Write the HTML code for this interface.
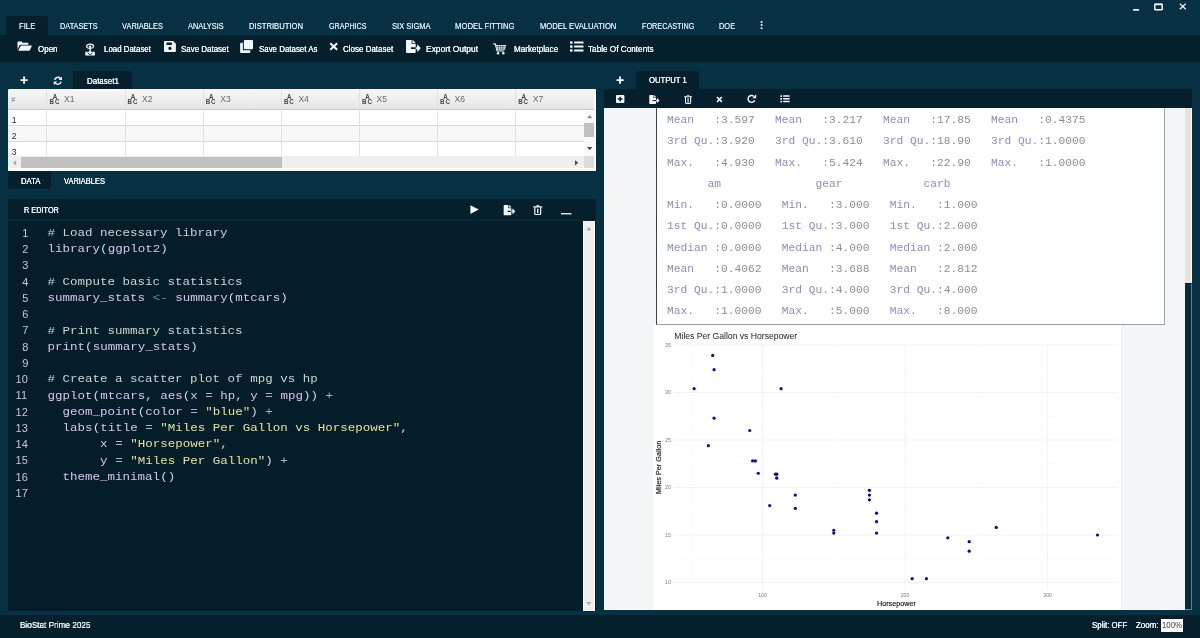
<!DOCTYPE html>
<html lang="en"><head><meta charset="utf-8"><title>BioStat Prime 2025</title>
<style>
*{margin:0;padding:0;box-sizing:border-box}
html,body{width:1200px;height:638px;overflow:hidden;background:#073042}
body{position:relative;font-family:"Liberation Sans", sans-serif}
#app{position:absolute;left:0;top:0;width:1200px;height:638px;will-change:transform}
.b{position:absolute}
.t{position:absolute;white-space:pre;transform-origin:0 50%;font-family:"Liberation Sans", sans-serif;text-shadow:0 0 .5px currentColor}
.ic{position:absolute;overflow:visible}
.ln{position:absolute;font:11px/14px "Liberation Sans", sans-serif;color:#c4cacd}
.cd{position:absolute;white-space:pre;font:12.5px/16.25px "Liberation Mono", monospace;color:#d6c6ef;transform-origin:0 11.45px;transform:scaleY(.87)}
.ot{position:absolute;white-space:pre;font:11.25px/14px "Liberation Mono", monospace;color:#8b8eba;transform-origin:0 10px;transform:scaleY(.91)}
.plot{position:absolute;font-family:"Liberation Sans", sans-serif}
#grid{position:absolute;left:8px;top:89px;width:588.2px;height:82px;background:#fff;border-radius:2px 2px 0 0;overflow:hidden}
#grid .hd{position:absolute;left:0;top:0;width:100%;height:21px;background:linear-gradient(#f7f7f7,#e6e6e6);border-bottom:1px solid #c9c9c9}
#grid .vl{position:absolute;top:0;width:1px;height:68px;background:#e2e2e2}
#grid .hx{position:absolute;top:6.2px;font:8.6px/9px "Liberation Sans", sans-serif;color:#6a6a6a}
#grid .hash{position:absolute;left:3.2px;top:6.5px;font:italic 7px/8px "Liberation Sans", sans-serif;color:#777}
#grid .abc{position:absolute;top:5.6px;width:10px;height:10px}
#grid .abc b{position:absolute;font:700 6.2px/6.2px "Liberation Sans", sans-serif;color:#444;transform:scaleY(1.15)}
#grid .rn{position:absolute;left:3.8px;font:8.6px/9px "Liberation Sans", sans-serif;color:#2a2a2a}
#grid .rl{position:absolute;left:0;width:576px;height:1px;background:#d9d9d9}
</style></head><body><div id="app">
<!-- menu / toolbar -->
<div class="b" style="left:6px;top:16px;width:41.5px;height:20px;background:#051f2c;border-radius:2.5px 2.5px 0 0"></div>
<div class="b" style="left:0;top:35.2px;width:1200px;height:27.2px;background:#051f2c"></div>
<!-- dataset tab + grid -->
<div class="b" style="left:73.4px;top:71.2px;width:58.4px;height:18px;background:#051f2c;border-radius:2.5px 2.5px 0 0"></div>
<div id="grid">
<div class="hd"></div>
<div class="b" style="left:0;top:36.0px;width:576px;height:15.6px;background:#f8f8f8"></div>
<i class="rl" style="top:36.0px"></i><i class="rl" style="top:51.6px"></i>
<span class="hash">#</span>
<i class="vl" style="left:38.4px"></i><span class="hx" style="left:56.0px">X1</span><span class="abc" style="left:41.8px"><b style="left:2.9px;top:-.3px">A</b><b style="left:-.3px;top:4.7px">B</b><b style="left:5.1px;top:4.7px">C</b></span><i class="vl" style="left:116.5px"></i><span class="hx" style="left:134.1px">X2</span><span class="abc" style="left:119.9px"><b style="left:2.9px;top:-.3px">A</b><b style="left:-.3px;top:4.7px">B</b><b style="left:5.1px;top:4.7px">C</b></span><i class="vl" style="left:194.6px"></i><span class="hx" style="left:212.2px">X3</span><span class="abc" style="left:198.0px"><b style="left:2.9px;top:-.3px">A</b><b style="left:-.3px;top:4.7px">B</b><b style="left:5.1px;top:4.7px">C</b></span><i class="vl" style="left:272.8px"></i><span class="hx" style="left:290.4px">X4</span><span class="abc" style="left:276.2px"><b style="left:2.9px;top:-.3px">A</b><b style="left:-.3px;top:4.7px">B</b><b style="left:5.1px;top:4.7px">C</b></span><i class="vl" style="left:350.9px"></i><span class="hx" style="left:368.5px">X5</span><span class="abc" style="left:354.3px"><b style="left:2.9px;top:-.3px">A</b><b style="left:-.3px;top:4.7px">B</b><b style="left:5.1px;top:4.7px">C</b></span><i class="vl" style="left:429.0px"></i><span class="hx" style="left:446.6px">X6</span><span class="abc" style="left:432.4px"><b style="left:2.9px;top:-.3px">A</b><b style="left:-.3px;top:4.7px">B</b><b style="left:5.1px;top:4.7px">C</b></span><i class="vl" style="left:507.1px"></i><span class="hx" style="left:524.7px">X7</span><span class="abc" style="left:510.5px"><b style="left:2.9px;top:-.3px">A</b><b style="left:-.3px;top:4.7px">B</b><b style="left:5.1px;top:4.7px">C</b></span><span class="rn" style="top:27.00px">1</span><span class="rn" style="top:42.75px">2</span><span class="rn" style="top:58.50px">3</span>
<!-- vertical scrollbar -->
<div class="b" style="left:575.6px;top:21.2px;width:12.6px;height:46.4px;background:#fafafa"></div>
<div class="b" style="left:576.2px;top:34.4px;width:10.9px;height:13.2px;background:#c1c1c1"></div>
<svg class="ic" style="left:578.6px;top:26.4px" width="5.4" height="3.2" viewBox="0 0 10 6"><path d="M0 6L5 0L10 6Z" fill="#8a8a8a"/></svg>
<svg class="ic" style="left:578.6px;top:58.2px" width="5.4" height="3.2" viewBox="0 0 10 6"><path d="M0 0L5 6L10 0Z" fill="#444"/></svg>
<!-- horizontal scrollbar -->
<div class="b" style="left:0;top:67.4px;width:576px;height:12px;background:#f0efee"></div>
<div class="b" style="left:575.6px;top:67.4px;width:12.6px;height:12px;background:#dcdcdc"></div>
<div class="b" style="left:13.4px;top:68.4px;width:260.6px;height:10.2px;background:#c1c1c1"></div>
<svg class="ic" style="left:5.2px;top:70.6px" width="3.2" height="5.6" viewBox="0 0 6 10"><path d="M6 0L0 5L6 10Z" fill="#a5a5a5"/></svg>
<svg class="ic" style="left:566.6px;top:70.6px" width="3.2" height="5.6" viewBox="0 0 6 10"><path d="M0 0L6 5L0 10Z" fill="#444"/></svg>
<div class="b" style="left:0;top:79.6px;width:588.2px;height:2.4px;background:#fbfbfb"></div>
<div class="b" style="left:586.4px;top:0;width:1.8px;height:82px;background:#fbfbfb"></div>
</div>
<!-- DATA / VARIABLES tabs -->
<div class="b" style="left:8px;top:171px;width:43.4px;height:17.9px;background:#051f2c;border-radius:0 0 2.5px 2.5px"></div>
<!-- R editor -->
<div class="b" style="left:8px;top:198.8px;width:588.2px;height:22px;background:#051f2c"></div>
<div class="b" style="left:8px;top:220.8px;width:588.2px;height:390.2px;background:#051d29"></div>
<div class="b" style="left:8px;top:219.9px;width:588.2px;height:1px;background:#0a2a38"></div>
<div class="b" style="left:582.6px;top:221.2px;width:12.9px;height:389.9px;background:#f0eeed;border-left:1px solid #fbfbfb;border-right:1px solid #fbfbfb"></div>
<svg class="ic" style="left:586.4px;top:227.4px" width="5.6" height="3.2" viewBox="0 0 10 6"><path d="M0 6L5 0L10 6Z" fill="#a9a9a9"/></svg>
<svg class="ic" style="left:586.4px;top:601.6px" width="5.6" height="3.2" viewBox="0 0 10 6"><path d="M0 0L5 6L10 0Z" fill="#a9a9a9"/></svg>
<span class="ln" style="left:22.2px;top:225.75px">1</span><span class="cd" style="left:47.6px;top:225.20px"><span style="color:#c6d6d3"># Load necessary library</span></span><span class="ln" style="left:22.2px;top:242.00px">2</span><span class="cd" style="left:47.6px;top:241.45px"><span style="color:#d6c6ef">library</span><span style="color:#c9dfe1">(</span><span style="color:#d6c6ef">ggplot2</span><span style="color:#c9dfe1">)</span></span><span class="ln" style="left:22.2px;top:258.25px">3</span><span class="ln" style="left:22.2px;top:274.50px">4</span><span class="cd" style="left:47.6px;top:273.95px"><span style="color:#c6d6d3"># Compute basic statistics</span></span><span class="ln" style="left:22.2px;top:290.75px">5</span><span class="cd" style="left:47.6px;top:290.20px"><span style="color:#d6c6ef">summary_stats</span> <span style="color:#3a9ea8">&lt;-</span> <span style="color:#d6c6ef">summary</span><span style="color:#c9dfe1">(</span><span style="color:#d6c6ef">mtcars</span><span style="color:#c9dfe1">)</span></span><span class="ln" style="left:22.2px;top:307.00px">6</span><span class="ln" style="left:22.2px;top:323.25px">7</span><span class="cd" style="left:47.6px;top:322.70px"><span style="color:#c6d6d3"># Print summary statistics</span></span><span class="ln" style="left:22.2px;top:339.50px">8</span><span class="cd" style="left:47.6px;top:338.95px"><span style="color:#d6c6ef">print</span><span style="color:#c9dfe1">(</span><span style="color:#d6c6ef">summary_stats</span><span style="color:#c9dfe1">)</span></span><span class="ln" style="left:22.2px;top:355.75px">9</span><span class="ln" style="left:15.6px;top:372.00px">10</span><span class="cd" style="left:47.6px;top:371.45px"><span style="color:#c6d6d3"># Create a scatter plot of mpg vs hp</span></span><span class="ln" style="left:15.6px;top:388.25px">11</span><span class="cd" style="left:47.6px;top:387.70px"><span style="color:#d6c6ef">ggplot</span><span style="color:#c9dfe1">(</span><span style="color:#d6c6ef">mtcars</span><span style="color:#c9dfe1">,</span> <span style="color:#d6c6ef">aes</span><span style="color:#c9dfe1">(</span><span style="color:#d6c6ef">x</span> <span style="color:#b3abd9">=</span> <span style="color:#d6c6ef">hp</span><span style="color:#c9dfe1">,</span> <span style="color:#d6c6ef">y</span> <span style="color:#b3abd9">=</span> <span style="color:#d6c6ef">mpg</span><span style="color:#c9dfe1">))</span> <span style="color:#b3abd9">+</span></span><span class="ln" style="left:15.6px;top:404.50px">12</span><span class="cd" style="left:47.6px;top:403.95px">  <span style="color:#d6c6ef">geom_point</span><span style="color:#c9dfe1">(</span><span style="color:#d6c6ef">color</span> <span style="color:#b3abd9">=</span> <span style="color:#e2e0a2">"blue"</span><span style="color:#c9dfe1">)</span> <span style="color:#b3abd9">+</span></span><span class="ln" style="left:15.6px;top:420.75px">13</span><span class="cd" style="left:47.6px;top:420.20px">  <span style="color:#d6c6ef">labs</span><span style="color:#c9dfe1">(</span><span style="color:#d6c6ef">title</span> <span style="color:#b3abd9">=</span> <span style="color:#e2e0a2">"Miles Per Gallon vs Horsepower"</span><span style="color:#c9dfe1">,</span></span><span class="ln" style="left:15.6px;top:437.00px">14</span><span class="cd" style="left:47.6px;top:436.45px">       <span style="color:#d6c6ef">x</span> <span style="color:#b3abd9">=</span> <span style="color:#e2e0a2">"Horsepower"</span><span style="color:#c9dfe1">,</span></span><span class="ln" style="left:15.6px;top:453.25px">15</span><span class="cd" style="left:47.6px;top:452.70px">       <span style="color:#d6c6ef">y</span> <span style="color:#b3abd9">=</span> <span style="color:#e2e0a2">"Miles Per Gallon"</span><span style="color:#c9dfe1">)</span> <span style="color:#b3abd9">+</span></span><span class="ln" style="left:15.6px;top:469.50px">16</span><span class="cd" style="left:47.6px;top:468.95px">  <span style="color:#d6c6ef">theme_minimal</span><span style="color:#c9dfe1">()</span></span><span class="ln" style="left:15.6px;top:485.75px">17</span>
<!-- output panel -->
<div class="b" style="left:636px;top:70.8px;width:62.5px;height:19px;background:#051f2c;border-radius:2.5px 2.5px 0 0"></div>
<div class="b" style="left:604px;top:89.4px;width:588px;height:18.6px;background:#051f2c"></div>
<div class="b" style="left:604px;top:107.6px;width:588px;height:502.4px;background:#f4f5f7"></div>
<div class="b" style="left:656px;top:100px;width:509.2px;height:224.8px;background:#fff;border:1px solid #9aa0a3;border-left-color:#3c4246"></div>
<div class="b" style="left:604px;top:89.4px;width:588px;height:18.2px;background:#051f2c"></div>
<span class="ot" style="left:666.9px;top:113.06px">Mean   <span style="color:#8e8e8e">:3.597</span>   Mean   <span style="color:#8e8e8e">:3.217</span>   Mean   <span style="color:#8e8e8e">:17.85</span>   Mean   <span style="color:#8e8e8e">:0.4375</span></span><span class="ot" style="left:666.9px;top:134.31px">3rd Qu.<span style="color:#8e8e8e">:3.920</span>   3rd Qu.<span style="color:#8e8e8e">:3.610</span>   3rd Qu.<span style="color:#8e8e8e">:18.90</span>   3rd Qu.<span style="color:#8e8e8e">:1.0000</span></span><span class="ot" style="left:666.9px;top:155.56px">Max.   <span style="color:#8e8e8e">:4.930</span>   Max.   <span style="color:#8e8e8e">:5.424</span>   Max.   <span style="color:#8e8e8e">:22.90</span>   Max.   <span style="color:#8e8e8e">:1.0000</span></span><span class="ot" style="left:666.9px;top:176.81px">      am              gear            carb</span><span class="ot" style="left:666.9px;top:198.06px">Min.   <span style="color:#8e8e8e">:0.0000</span>   Min.   <span style="color:#8e8e8e">:3.000</span>   Min.   <span style="color:#8e8e8e">:1.000</span></span><span class="ot" style="left:666.9px;top:219.31px">1st Qu.<span style="color:#8e8e8e">:0.0000</span>   1st Qu.<span style="color:#8e8e8e">:3.000</span>   1st Qu.<span style="color:#8e8e8e">:2.000</span></span><span class="ot" style="left:666.9px;top:240.56px">Median <span style="color:#8e8e8e">:0.0000</span>   Median <span style="color:#8e8e8e">:4.000</span>   Median <span style="color:#8e8e8e">:2.000</span></span><span class="ot" style="left:666.9px;top:261.81px">Mean   <span style="color:#8e8e8e">:0.4062</span>   Mean   <span style="color:#8e8e8e">:3.688</span>   Mean   <span style="color:#8e8e8e">:2.812</span></span><span class="ot" style="left:666.9px;top:283.06px">3rd Qu.<span style="color:#8e8e8e">:1.0000</span>   3rd Qu.<span style="color:#8e8e8e">:4.000</span>   3rd Qu.<span style="color:#8e8e8e">:4.000</span></span><span class="ot" style="left:666.9px;top:304.31px">Max.   <span style="color:#8e8e8e">:1.0000</span>   Max.   <span style="color:#8e8e8e">:5.000</span>   Max.   <span style="color:#8e8e8e">:8.000</span></span>
<svg class="plot" style="left:652.6px;top:324.6px" width="468.6" height="285.4" viewBox="0 0 468.6 285.4"><rect width="468.6" height="285.4" fill="#fff"/><line x1="20.9" x2="464.7" y1="233.75" y2="233.75" stroke="#f6f6f6" stroke-width="0.4"/><line x1="20.9" x2="464.7" y1="186.25" y2="186.25" stroke="#f6f6f6" stroke-width="0.4"/><line x1="20.9" x2="464.7" y1="138.75" y2="138.75" stroke="#f6f6f6" stroke-width="0.4"/><line x1="20.9" x2="464.7" y1="91.25" y2="91.25" stroke="#f6f6f6" stroke-width="0.4"/><line x1="20.9" x2="464.7" y1="43.75" y2="43.75" stroke="#f6f6f6" stroke-width="0.4"/><line y1="19.3" y2="264.9" x1="38.23" x2="38.23" stroke="#f6f6f6" stroke-width="0.4"/><line y1="19.3" y2="264.9" x1="180.77" x2="180.77" stroke="#f6f6f6" stroke-width="0.4"/><line y1="19.3" y2="264.9" x1="323.32" x2="323.32" stroke="#f6f6f6" stroke-width="0.4"/><line x1="20.9" x2="464.7" y1="257.50" y2="257.50" stroke="#eeeeee" stroke-width="0.7"/><text x="17.9" y="259.40" text-anchor="end" font-size="5.2" fill="#7d7d7d">10</text><line x1="20.9" x2="464.7" y1="210.00" y2="210.00" stroke="#eeeeee" stroke-width="0.7"/><text x="17.9" y="211.90" text-anchor="end" font-size="5.2" fill="#7d7d7d">15</text><line x1="20.9" x2="464.7" y1="162.50" y2="162.50" stroke="#eeeeee" stroke-width="0.7"/><text x="17.9" y="164.40" text-anchor="end" font-size="5.2" fill="#7d7d7d">20</text><line x1="20.9" x2="464.7" y1="115.00" y2="115.00" stroke="#eeeeee" stroke-width="0.7"/><text x="17.9" y="116.90" text-anchor="end" font-size="5.2" fill="#7d7d7d">25</text><line x1="20.9" x2="464.7" y1="67.50" y2="67.50" stroke="#eeeeee" stroke-width="0.7"/><text x="17.9" y="69.40" text-anchor="end" font-size="5.2" fill="#7d7d7d">30</text><line x1="20.9" x2="464.7" y1="20.00" y2="20.00" stroke="#eeeeee" stroke-width="0.7"/><text x="17.9" y="21.90" text-anchor="end" font-size="5.2" fill="#7d7d7d">35</text><line y1="19.3" y2="264.9" x1="109.50" x2="109.50" stroke="#eeeeee" stroke-width="0.7"/><text x="109.50" y="272.00" text-anchor="middle" font-size="5.2" fill="#7d7d7d">100</text><line y1="19.3" y2="264.9" x1="252.05" x2="252.05" stroke="#eeeeee" stroke-width="0.7"/><text x="252.05" y="272.00" text-anchor="middle" font-size="5.2" fill="#7d7d7d">200</text><line y1="19.3" y2="264.9" x1="394.60" x2="394.60" stroke="#eeeeee" stroke-width="0.7"/><text x="394.60" y="272.00" text-anchor="middle" font-size="5.2" fill="#7d7d7d">300</text><circle cx="123.75" cy="153.00" r="1.6" fill="#0b0b8e"/><circle cx="123.75" cy="153.00" r="1.6" fill="#0b0b8e"/><circle cx="99.52" cy="135.90" r="1.6" fill="#0b0b8e"/><circle cx="123.75" cy="149.20" r="1.6" fill="#0b0b8e"/><circle cx="216.41" cy="174.85" r="1.6" fill="#0b0b8e"/><circle cx="116.63" cy="180.55" r="1.6" fill="#0b0b8e"/><circle cx="316.20" cy="216.65" r="1.6" fill="#0b0b8e"/><circle cx="55.33" cy="120.70" r="1.6" fill="#0b0b8e"/><circle cx="102.37" cy="135.90" r="1.6" fill="#0b0b8e"/><circle cx="142.29" cy="170.10" r="1.6" fill="#0b0b8e"/><circle cx="142.29" cy="183.40" r="1.6" fill="#0b0b8e"/><circle cx="223.54" cy="196.70" r="1.6" fill="#0b0b8e"/><circle cx="223.54" cy="188.15" r="1.6" fill="#0b0b8e"/><circle cx="223.54" cy="208.10" r="1.6" fill="#0b0b8e"/><circle cx="259.18" cy="253.70" r="1.6" fill="#0b0b8e"/><circle cx="273.43" cy="253.70" r="1.6" fill="#0b0b8e"/><circle cx="294.81" cy="212.85" r="1.6" fill="#0b0b8e"/><circle cx="61.03" cy="44.70" r="1.6" fill="#0b0b8e"/><circle cx="41.08" cy="63.70" r="1.6" fill="#0b0b8e"/><circle cx="59.61" cy="30.45" r="1.6" fill="#0b0b8e"/><circle cx="105.22" cy="148.25" r="1.6" fill="#0b0b8e"/><circle cx="180.77" cy="205.25" r="1.6" fill="#0b0b8e"/><circle cx="180.77" cy="208.10" r="1.6" fill="#0b0b8e"/><circle cx="316.20" cy="226.15" r="1.6" fill="#0b0b8e"/><circle cx="216.41" cy="170.10" r="1.6" fill="#0b0b8e"/><circle cx="61.03" cy="93.15" r="1.6" fill="#0b0b8e"/><circle cx="96.67" cy="105.50" r="1.6" fill="#0b0b8e"/><circle cx="128.03" cy="63.70" r="1.6" fill="#0b0b8e"/><circle cx="343.28" cy="202.40" r="1.6" fill="#0b0b8e"/><circle cx="216.41" cy="165.35" r="1.6" fill="#0b0b8e"/><circle cx="444.49" cy="210.00" r="1.6" fill="#0b0b8e"/><circle cx="122.33" cy="149.20" r="1.6" fill="#0b0b8e"/><text x="21.3" y="14.3" font-size="8.6" fill="#1a1a1a" textLength="122.9" lengthAdjust="spacingAndGlyphs">Miles Per Gallon vs Horsepower</text><text x="243.4" y="281.0" font-size="7.2" fill="#111" stroke="#111" stroke-width=".15" text-anchor="middle">Horsepower</text><text transform="translate(8.3,142.4) rotate(-90)" font-size="7.3" fill="#111" stroke="#111" stroke-width=".15" text-anchor="middle">Miles Per Gallon</text></svg>
<!-- output scrollbar -->
<div class="b" style="left:1185.4px;top:107.6px;width:5.4px;height:175.6px;background:#e6e2e0"></div>
<div class="b" style="left:1190.8px;top:107.6px;width:1.2px;height:175.6px;background:#fbfbfb"></div>
<div class="b" style="left:1185.4px;top:283.2px;width:6.6px;height:326.8px;background:#072a3b;border-right:1.2px solid #5e7f95;border-bottom:1.2px solid #5e7f95;border-top:1.4px solid #051a25"></div>
<!-- status bar -->
<div class="b" style="left:0;top:615.2px;width:1200px;height:22.8px;background:#051f2c"></div>
<div class="b" style="left:1160.6px;top:619px;width:22.6px;height:13.4px;background:#fff"></div>
<span class="t" style="left:18.8px;top:22.18px;font-size:9.0px;line-height:9.0px;color:#d4e9f2;font-weight:400;transform:scaleX(0.8572)">FILE</span><span class="t" style="left:60.0px;top:22.18px;font-size:9.0px;line-height:9.0px;color:#d4e9f2;font-weight:400;transform:scaleX(0.8141)">DATASETS</span><span class="t" style="left:122.3px;top:22.18px;font-size:9.0px;line-height:9.0px;color:#d4e9f2;font-weight:400;transform:scaleX(0.8286)">VARIABLES</span><span class="t" style="left:188.3px;top:22.18px;font-size:9.0px;line-height:9.0px;color:#d4e9f2;font-weight:400;transform:scaleX(0.8234)">ANALYSIS</span><span class="t" style="left:249.1px;top:22.18px;font-size:9.0px;line-height:9.0px;color:#d4e9f2;font-weight:400;transform:scaleX(0.8502)">DISTRIBUTION</span><span class="t" style="left:328.9px;top:22.18px;font-size:9.0px;line-height:9.0px;color:#d4e9f2;font-weight:400;transform:scaleX(0.7997)">GRAPHICS</span><span class="t" style="left:391.6px;top:22.18px;font-size:9.0px;line-height:9.0px;color:#d4e9f2;font-weight:400;transform:scaleX(0.8388)">SIX SIGMA</span><span class="t" style="left:455.0px;top:22.18px;font-size:9.0px;line-height:9.0px;color:#d4e9f2;font-weight:400;transform:scaleX(0.8616)">MODEL FITTING</span><span class="t" style="left:539.7px;top:22.18px;font-size:9.0px;line-height:9.0px;color:#d4e9f2;font-weight:400;transform:scaleX(0.8502)">MODEL EVALUATION</span><span class="t" style="left:641.7px;top:22.18px;font-size:9.0px;line-height:9.0px;color:#d4e9f2;font-weight:400;transform:scaleX(0.8060)">FORECASTING</span><span class="t" style="left:718.8px;top:22.18px;font-size:9.0px;line-height:9.0px;color:#d4e9f2;font-weight:400;transform:scaleX(0.8250)">DOE</span><span class="t" style="left:37.6px;top:44.78px;font-size:9.0px;line-height:9.0px;color:#e4eef3;font-weight:400;transform:scaleX(0.8851);text-shadow:0 0 .5px currentColor,0 0 .4px currentColor">Open</span><span class="t" style="left:104.4px;top:44.78px;font-size:9.0px;line-height:9.0px;color:#e4eef3;font-weight:400;transform:scaleX(0.8759);text-shadow:0 0 .5px currentColor,0 0 .4px currentColor">Load Dataset</span><span class="t" style="left:180.7px;top:44.78px;font-size:9.0px;line-height:9.0px;color:#e4eef3;font-weight:400;transform:scaleX(0.8828);text-shadow:0 0 .5px currentColor,0 0 .4px currentColor">Save Dataset</span><span class="t" style="left:258.5px;top:44.78px;font-size:9.0px;line-height:9.0px;color:#e4eef3;font-weight:400;transform:scaleX(0.8776);text-shadow:0 0 .5px currentColor,0 0 .4px currentColor">Save Dataset As</span><span class="t" style="left:343.3px;top:44.78px;font-size:9.0px;line-height:9.0px;color:#e4eef3;font-weight:400;transform:scaleX(0.8880);text-shadow:0 0 .5px currentColor,0 0 .4px currentColor">Close Dataset</span><span class="t" style="left:425.8px;top:44.78px;font-size:9.0px;line-height:9.0px;color:#e4eef3;font-weight:400;transform:scaleX(0.9382);text-shadow:0 0 .5px currentColor,0 0 .4px currentColor">Export Output</span><span class="t" style="left:514.0px;top:44.78px;font-size:9.0px;line-height:9.0px;color:#e4eef3;font-weight:400;transform:scaleX(0.9015);text-shadow:0 0 .5px currentColor,0 0 .4px currentColor">Marketplace</span><span class="t" style="left:588.4px;top:44.78px;font-size:9.0px;line-height:9.0px;color:#e4eef3;font-weight:400;transform:scaleX(0.9105);text-shadow:0 0 .5px currentColor,0 0 .4px currentColor">Table Of Contents</span><span class="t" style="left:86.8px;top:76.68px;font-size:9.0px;line-height:9.0px;color:#e4eef3;font-weight:400;transform:scaleX(0.8826);text-shadow:0 0 .5px currentColor,0 0 .4px currentColor">Dataset1</span><span class="t" style="left:20.5px;top:176.58px;font-size:9.0px;line-height:9.0px;color:#e4eef3;font-weight:400;transform:scaleX(0.8557);text-shadow:0 0 .5px currentColor,0 0 .4px currentColor">DATA</span><span class="t" style="left:64.2px;top:176.58px;font-size:9.0px;line-height:9.0px;color:#e4eef3;font-weight:400;transform:scaleX(0.8286);text-shadow:0 0 .5px currentColor,0 0 .4px currentColor">VARIABLES</span><span class="t" style="left:23.8px;top:205.78px;font-size:9.0px;line-height:9.0px;color:#e4eef3;font-weight:400;transform:scaleX(0.8146);text-shadow:0 0 .5px currentColor,0 0 .4px currentColor">R EDITOR</span><span class="t" style="left:649.0px;top:76.38px;font-size:9.0px;line-height:9.0px;color:#e4eef3;font-weight:400;transform:scaleX(0.8524);text-shadow:0 0 .5px currentColor,0 0 .4px currentColor">OUTPUT 1</span><span class="t" style="left:19.5px;top:621.08px;font-size:9.0px;line-height:9.0px;color:#e4eef3;font-weight:400;transform:scaleX(0.9091);text-shadow:0 0 .5px currentColor,0 0 .4px currentColor">BioStat Prime 2025</span><span class="t" style="left:1092.3px;top:621.48px;font-size:9.0px;line-height:9.0px;color:#e4eef3;font-weight:400;transform:scaleX(0.8688);text-shadow:0 0 .5px currentColor,0 0 .4px currentColor">Split: OFF</span><span class="t" style="left:1136.3px;top:621.48px;font-size:9.0px;line-height:9.0px;color:#e4eef3;font-weight:400;transform:scaleX(0.8818);text-shadow:0 0 .5px currentColor,0 0 .4px currentColor">Zoom:</span><span class="t" style="left:1162.0px;top:621.48px;font-size:9.0px;line-height:9.0px;color:#777;font-weight:400;transform:scaleX(0.8684)">100%</span>
<svg class="ic" style="left:17.3px;top:41.2px" width="15.2" height="10.3" viewBox="0 0 30 20" ><path fill="#f2f7fa" d="M1 2.5Q1 1 2.5 1H9l2.5 2.5H21q1.5 0 1.5 1.5v2H7.5Q5.5 7 4.7 8.8L1 16.5Z"/><path fill="#f2f7fa" d="M7.8 8.6H28.6q1.2 0 .7 1.1L25.6 17.8Q25 19 23.8 19H2.2Z"/></svg><svg class="ic" style="left:85.0px;top:42.6px" width="10.2" height="13.0" viewBox="0 0 20 26" ><ellipse cx="10" cy="6.3" rx="7" ry="4.2" fill="none" stroke="#eef4f7" stroke-width="2.4"/><ellipse cx="10" cy="6.8" rx="2.6" ry="1.7" fill="#f2f7fa"/><rect x="8.6" y="8" width="2.8" height="11" fill="#f2f7fa"/><rect x="0.4" y="17.4" width="19.2" height="7.8" rx=".8" fill="#f2f7fa"/><path d="M5 19.6L10 23.4L15 19.6" fill="none" stroke="#051f2c" stroke-width="1.9"/><rect x="8.8" y="16" width="2.4" height="5.4" fill="#f2f7fa"/></svg><svg class="ic" style="left:163.8px;top:40.8px" width="11.9" height="11.0" viewBox="0 0 24 22" ><path fill="#f2f7fa" fill-rule="evenodd" d="M2 0H18.5L24 5.5V20q0 2-2 2H2q-2 0-2-2V2Q0 0 2 0ZM5 2.8V8H16V2.8ZM12 11.5a3.3 3.3 0 1 0 .01 0Z"/></svg><svg class="ic" style="left:240.3px;top:39.9px" width="13.2" height="12.9" viewBox="0 0 26 26" ><rect x="7.5" y="0" width="18.5" height="18.5" rx="2" fill="#f2f7fa"/><path fill="#f2f7fa" d="M2 5.5H5.5V20.5H20.5V24q0 2-2 2H2q-2 0-2-2V7.5Q0 5.5 2 5.5Z"/></svg><svg class="ic" style="left:328.9px;top:42.0px" width="9.4" height="8.9" viewBox="0 0 19 18" ><path d="M2.6 2.4L16.4 15.6M16.4 2.4L2.6 15.6" stroke="#f2f7fa" stroke-width="4.2" stroke-linecap="butt"/></svg><svg class="ic" style="left:406.0px;top:39.9px" width="14.5" height="13.0" viewBox="0 0 576 512" ><path fill="#f2f7fa" d="M24 0H224V136q0 24 24 24H384V288H208q-16 0-16 16v32q0 16 16 16H384V488q0 24-24 24H24q-24 0-24-24V24Q0 0 24 0Z"/><path fill="#f2f7fa" d="M256 0h6q10 0 17 7l98 98q7 7 7 17v6H256Z"/><path fill="#f2f7fa" d="M384 282h56v-82c0-14 17-21 27-11l108 119q10 12 0 24l-108 119c-10 10-27 3-27-11V358h-56Z"/></svg><svg class="ic" style="left:493.3px;top:43.0px" width="13.4" height="12.2" viewBox="0 0 27 24" ><path d="M0.5 1.5H4.5L8.2 15.8H22.5" fill="none" stroke="#f2f7fa" stroke-width="2.2"/><path fill="#f2f7fa" d="M5.6 3.8H26.6L24 13.4H8.1Z"/><path d="M6 6.8H26M7 10H25M11 4V13M15.5 4V13M20 4V13" stroke="#051f2c" stroke-width="0.9"/><circle cx="10.2" cy="20.6" r="2.5" fill="#f2f7fa"/><circle cx="20.8" cy="20.6" r="2.5" fill="#f2f7fa"/></svg><svg class="ic" style="left:570.0px;top:40.8px" width="13.6" height="11.0" viewBox="0 0 27 22" ><rect x="0" y="0.5" width="5" height="5" rx="1" fill="#f2f7fa"/><rect x="0" y="8.5" width="5" height="5" rx="1" fill="#f2f7fa"/><rect x="0" y="16.5" width="5" height="5" rx="1" fill="#f2f7fa"/><rect x="8" y="1" width="19" height="4" rx="1" fill="#f2f7fa"/><rect x="8" y="9" width="19" height="4" rx="1" fill="#f2f7fa"/><rect x="8" y="17" width="19" height="4" rx="1" fill="#f2f7fa"/></svg><svg class="ic" style="left:760.0px;top:21.3px" width="3.2" height="8.2" viewBox="0 0 6 16" ><circle cx="3" cy="2" r="2" fill="#f2f7fa"/><circle cx="3" cy="8" r="2" fill="#f2f7fa"/><circle cx="3" cy="14" r="2" fill="#f2f7fa"/></svg><svg class="ic" style="left:1132.8px;top:9.1px" width="6.2" height="1.8" viewBox="0 0 7 2" ><rect width="7" height="2" rx=".5" fill="#e6eef2"/></svg><svg class="ic" style="left:1154.2px;top:2.7px" width="9.0" height="7.6" viewBox="0 0 9 7.6" ><rect x=".8" y="1.3" width="7.4" height="5.5" fill="none" stroke="#f2f7fa" stroke-width="1.5" rx=".6"/><rect x=".8" y=".6" width="7.4" height="1.6" fill="#f2f7fa"/></svg><svg class="ic" style="left:1178.6px;top:3.2px" width="7.6" height="6.8" viewBox="0 0 7.6 6.8" ><path d="M.8.6L6.8 6.2M6.8.6L.8 6.2" stroke="#f2f7fa" stroke-width="1.25"/></svg><svg class="ic" style="left:19.9px;top:76.0px" width="8.2" height="8.2" viewBox="0 0 10 10" ><path d="M5 .6V9.4M.6 5H9.4" stroke="#f2f7fa" stroke-width="2.3"/></svg><svg class="ic" style="left:616.2px;top:76.0px" width="8.2" height="8.2" viewBox="0 0 10 10" ><path d="M5 .6V9.4M.6 5H9.4" stroke="#f2f7fa" stroke-width="2.3"/></svg><svg class="ic" style="left:52.5px;top:75.6px" width="9.8" height="9.6" viewBox="0 0 20 20" ><path d="M3.2 8.2A7 7 0 0 1 15.3 5.2" fill="none" stroke="#f2f7fa" stroke-width="3"/><path d="M18.6 1.2V8.4H11.4Z" fill="#f2f7fa"/><path d="M16.8 11.8A7 7 0 0 1 4.7 14.8" fill="none" stroke="#f2f7fa" stroke-width="3"/><path d="M1.4 18.8V11.6H8.6Z" fill="#f2f7fa"/></svg><svg class="ic" style="left:470.0px;top:204.9px" width="9.2" height="9.2" viewBox="0 0 10 10" ><path fill="#f2f7fa" d="M.4.2L9.6 5L.4 9.8Z"/></svg><svg class="ic" style="left:502.6px;top:204.8px" width="12.8" height="10.2" viewBox="0 0 576 512" ><path fill="#f2f7fa" d="M24 0H224V136q0 24 24 24H384V288H208q-16 0-16 16v32q0 16 16 16H384V488q0 24-24 24H24q-24 0-24-24V24Q0 0 24 0Z"/><path fill="#f2f7fa" d="M256 0h6q10 0 17 7l98 98q7 7 7 17v6H256Z"/><path fill="#f2f7fa" d="M384 282h56v-82c0-14 17-21 27-11l108 119q10 12 0 24l-108 119c-10 10-27 3-27-11V358h-56Z"/></svg><svg class="ic" style="left:532.8px;top:204.9px" width="9.5" height="10.1" viewBox="0 0 19 21" ><path d="M6.3 3.4L7.5 1.1H11.5L12.7 3.4" fill="none" stroke="#f2f7fa" stroke-width="2"/><rect x="0" y="2.8" width="19" height="2.6" rx=".6" fill="#f2f7fa"/><path d="M3.4 4.6V18Q3.4 19.8 5.2 19.8H13.8Q15.6 19.8 15.6 18V4.6" fill="none" stroke="#f2f7fa" stroke-width="2.5"/><path d="M9.5 7.8V17" stroke="#f2f7fa" stroke-width="2.8"/></svg><svg class="ic" style="left:561.2px;top:212.5px" width="10.4" height="1.5" viewBox="0 0 11 1.5" ><rect width="11" height="1.5" fill="#e6eef2"/></svg><svg class="ic" style="left:616.0px;top:95.0px" width="8.4" height="8.1" viewBox="0 0 17 16" ><path fill="#f2f7fa" fill-rule="evenodd" d="M2 0H15Q17 0 17 2V14Q17 16 15 16H2Q0 16 0 14V2Q0 0 2 0ZM7 3.2V6.6H3.6V9.4H7V12.8H10V9.4H13.4V6.6H10V3.2Z"/></svg><svg class="ic" style="left:648.5px;top:94.6px" width="10.6" height="8.9" viewBox="0 0 576 512" ><path fill="#f2f7fa" d="M24 0H224V136q0 24 24 24H384V288H208q-16 0-16 16v32q0 16 16 16H384V488q0 24-24 24H24q-24 0-24-24V24Q0 0 24 0Z"/><path fill="#f2f7fa" d="M256 0h6q10 0 17 7l98 98q7 7 7 17v6H256Z"/><path fill="#f2f7fa" d="M384 282h56v-82c0-14 17-21 27-11l108 119q10 12 0 24l-108 119c-10 10-27 3-27-11V358h-56Z"/></svg><svg class="ic" style="left:683.6px;top:94.7px" width="8.2" height="8.9" viewBox="0 0 19 21" ><path d="M6.3 3.4L7.5 1.1H11.5L12.7 3.4" fill="none" stroke="#f2f7fa" stroke-width="2"/><rect x="0" y="2.8" width="19" height="2.6" rx=".6" fill="#f2f7fa"/><path d="M3.4 4.6V18Q3.4 19.8 5.2 19.8H13.8Q15.6 19.8 15.6 18V4.6" fill="none" stroke="#f2f7fa" stroke-width="2.5"/><path d="M9.5 7.8V17" stroke="#f2f7fa" stroke-width="2.8"/></svg><svg class="ic" style="left:716.0px;top:95.8px" width="6.8" height="6.8" viewBox="0 0 14 14" ><path d="M2 2L12 12M12 2L2 12" stroke="#f2f7fa" stroke-width="3.2"/></svg><svg class="ic" style="left:746.8px;top:94.4px" width="9.4" height="9.2" viewBox="0 0 19 18" ><path d="M15.6 12.4A7 7 0 1 1 13.6 4.2" fill="none" stroke="#f2f7fa" stroke-width="2.9"/><path d="M18.6 .4V8.2H10.8Z" fill="#f2f7fa"/></svg><svg class="ic" style="left:780.2px;top:95.2px" width="10.0" height="7.6" viewBox="0 0 27 22" ><rect x="0" y="0.5" width="5" height="5" rx="1" fill="#f2f7fa"/><rect x="0" y="8.5" width="5" height="5" rx="1" fill="#f2f7fa"/><rect x="0" y="16.5" width="5" height="5" rx="1" fill="#f2f7fa"/><rect x="8" y="1" width="19" height="4" rx="1" fill="#f2f7fa"/><rect x="8" y="9" width="19" height="4" rx="1" fill="#f2f7fa"/><rect x="8" y="17" width="19" height="4" rx="1" fill="#f2f7fa"/></svg>
</div></body></html>
